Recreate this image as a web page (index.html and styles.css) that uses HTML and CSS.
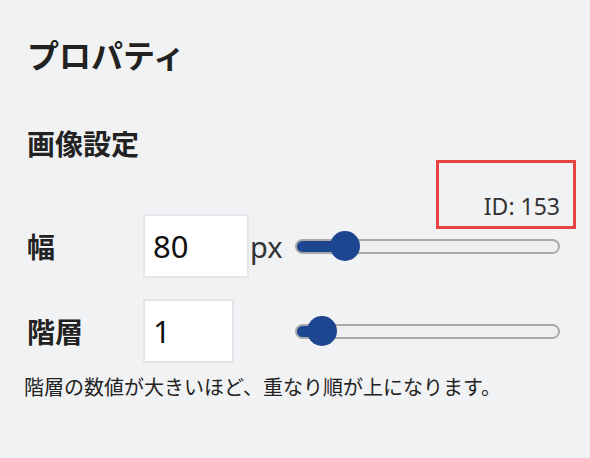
FILE: index.html
```html
<!DOCTYPE html>
<html lang="ja">
<head>
    <meta charset="UTF-8">
    <title>プロパティ</title>
    <meta name="viewport" content="width=device-width, initial-scale=1.0">
    <link rel="stylesheet" href="styles.css">
</head>
<body>
    <div class="panel">
        <h1>プロパティ</h1>
        <h2>画像設定</h2>

        <div class="id-line"><span class="id-tag">ID: 153</span></div>

        <div class="fields">
            <label class="field-label" for="width">幅</label>
            <div class="field-input">
                <input type="text" id="width" class="num num-wide" value="80">
                <span class="unit">px</span>
            </div>
            <input type="range" class="slider" min="10" max="500" value="80" style="--fill: 18.4%">

            <label class="field-label" for="layer">階層</label>
            <div class="field-input">
                <input type="text" id="layer" class="num num-narrow" value="1">
            </div>
            <input type="range" class="slider" min="0" max="24" value="1" style="--fill: 9.4%">
        </div>

        <p class="note">階層の数値が大きいほど、重なり順が上になります。</p>
    </div>
</body>
</html>
```

FILE: styles.css
```css
body {
    margin: 0;
    background-color: #f1f2f4;
    font-family: "Noto Sans", "Noto Sans CJK JP", sans-serif;
    color: #222;
}

.panel {
    padding: 37px 30px 20px 27px;
}

h1 {
    margin: 0;
    font-size: 32px;
    line-height: 38px;
    font-weight: bold;
}

h2 {
    margin: 52px 0 0;
    font-size: 28px;
    line-height: 34px;
    font-weight: bold;
}

.id-line {
    margin-top: 34px;
    margin-bottom: -3px;
    text-align: right;
    font-size: 23px;
    line-height: 22px;
    color: #333;
}

/* red highlight frame around the id */
.id-tag {
    position: relative;
}

.id-tag::after {
    content: '';
    position: absolute;
    left: -48px;
    right: -16px;
    top: -30px;
    bottom: -7px;
    border: 3px solid #e94343;
}

.fields {
    display: grid;
    grid-template-columns: 116px 152px 265px;
    row-gap: 21px;
    align-items: center;
}

.field-label {
    font-size: 28px;
    font-weight: bold;
}

.field-input {
    display: flex;
    align-items: center;
}

.num {
    box-sizing: border-box;
    height: 64px;
    padding: 0 0 0 8px;
    border: 2px solid #e4e5e8;
    border-radius: 0;
    background-color: white;
    font-family: inherit;
    font-size: 31px;
    color: #111;
    outline: none;
}

.num-wide {
    width: 106px;
}

.num-narrow {
    width: 91px;
}

.unit {
    margin-left: 1px;
    font-size: 29px;
    color: #333;
}

.slider {
    -webkit-appearance: none;
    appearance: none;
    box-sizing: border-box;
    width: 265px;
    height: 15px;
    margin: 0;
    border: 2px solid #aaa;
    border-radius: 8px;
    background: linear-gradient(to right, #1c4690 var(--fill), #efefef var(--fill));
}

.slider::-webkit-slider-thumb {
    -webkit-appearance: none;
    appearance: none;
    width: 30px;
    height: 30px;
    border: none;
    border-radius: 50%;
    background-color: #1c4690;
    cursor: pointer;
}

.note {
    margin: 11px 0 0 -3px;
    font-size: 20px;
    line-height: 28px;
    color: #222;
}
```
